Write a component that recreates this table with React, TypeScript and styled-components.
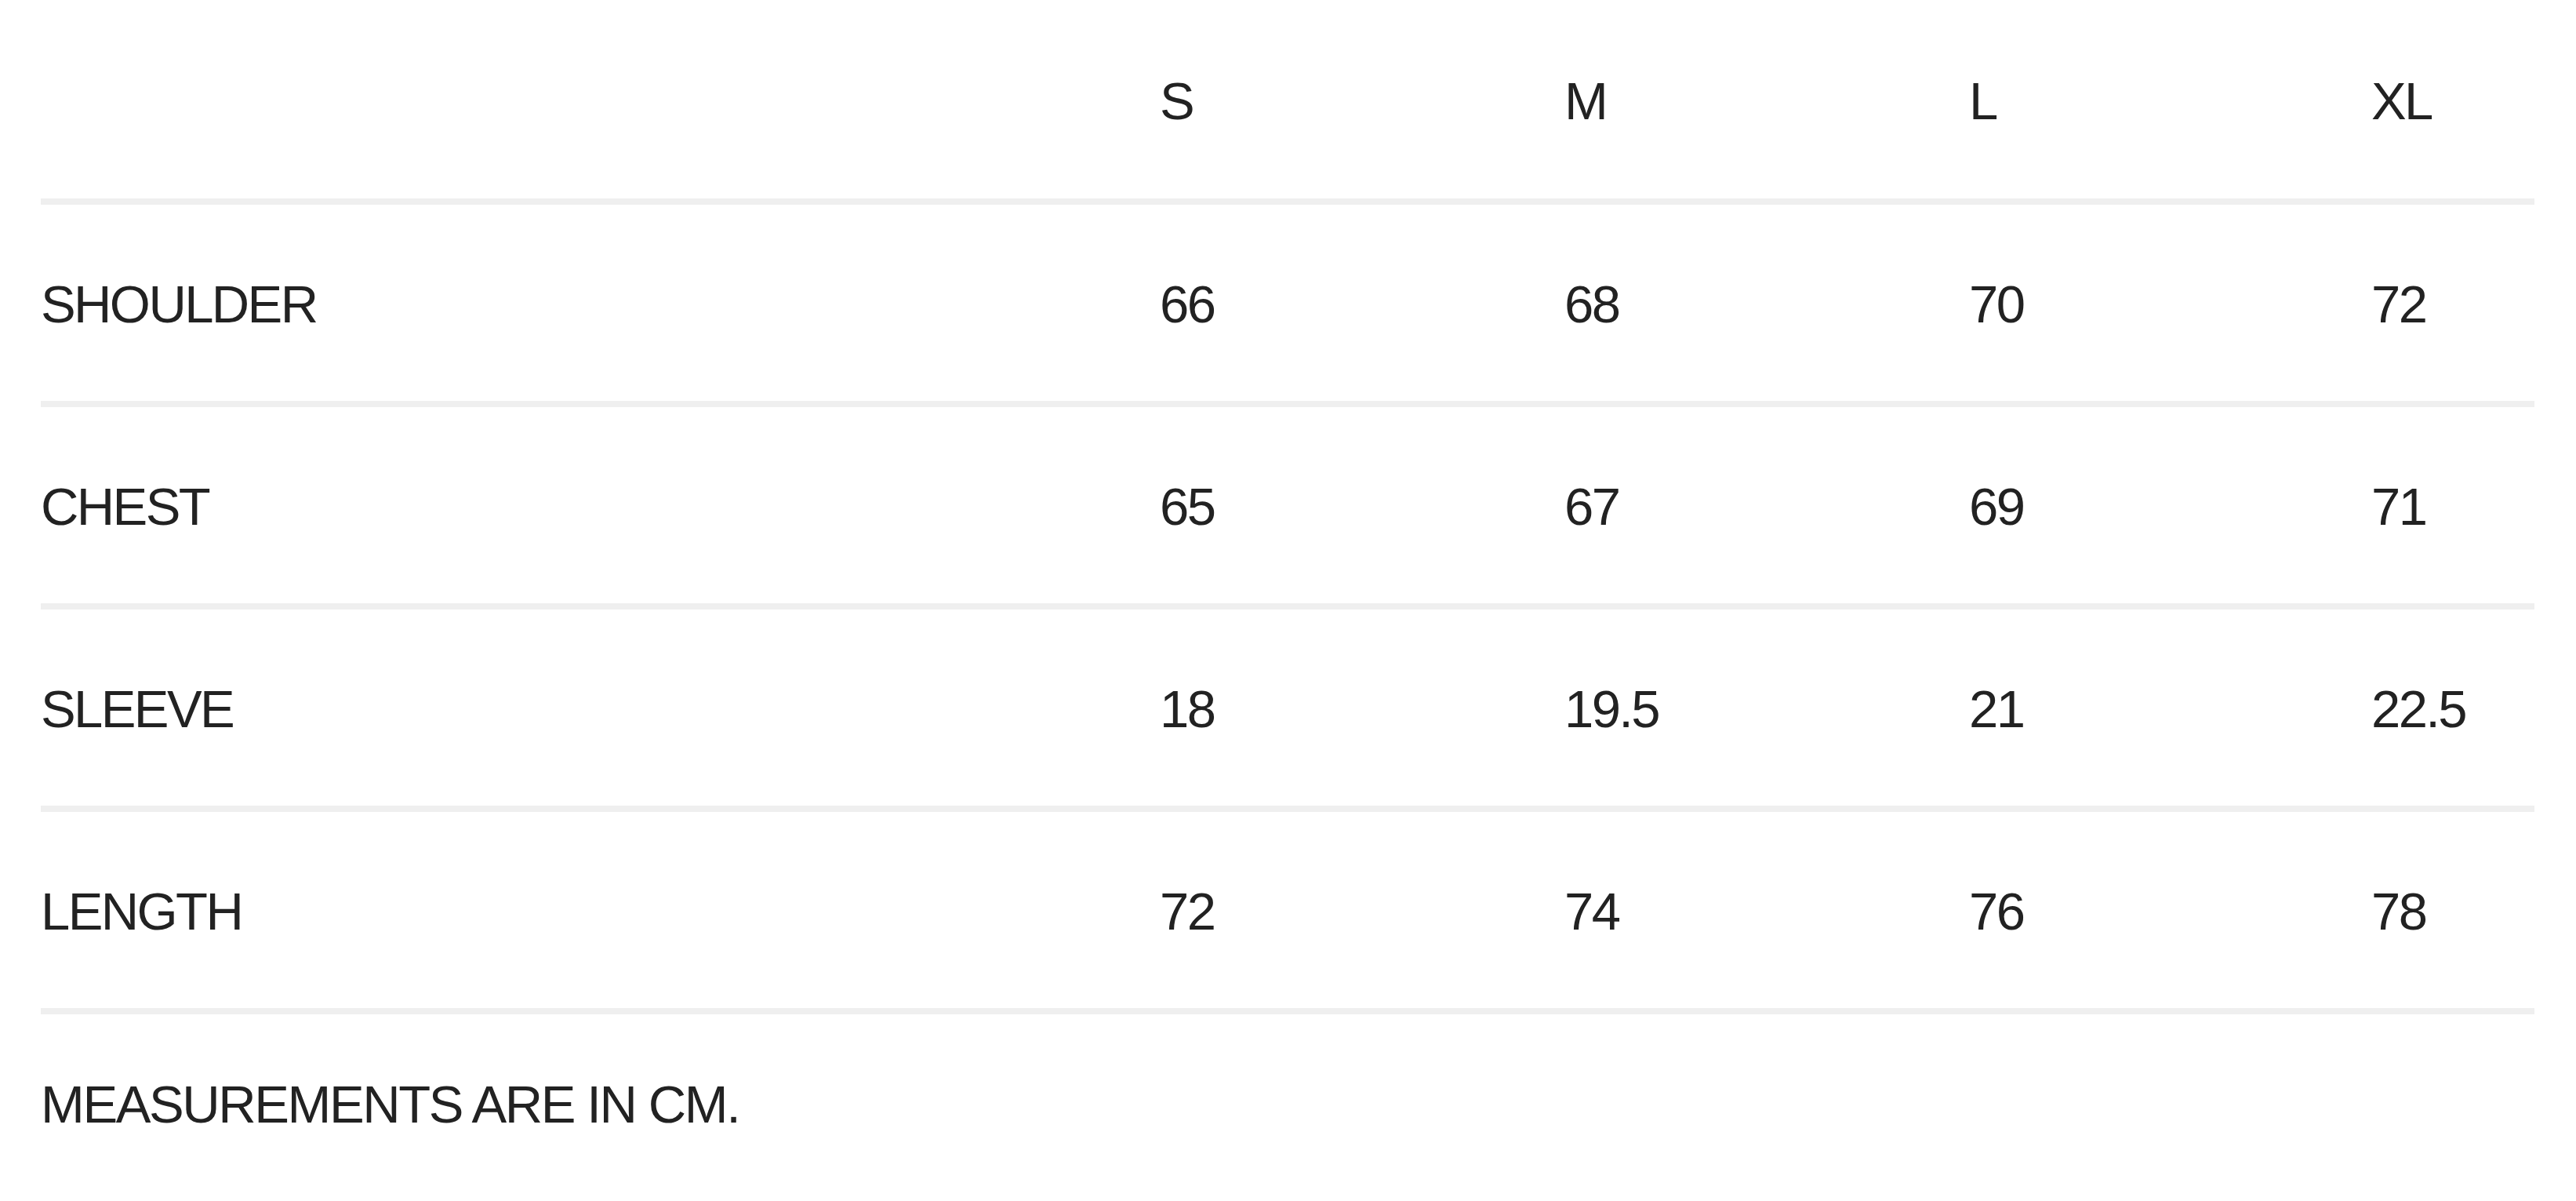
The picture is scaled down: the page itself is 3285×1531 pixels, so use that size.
import React from 'react';
import styled, { createGlobalStyle } from 'styled-components';

const sizes = ['S', 'M', 'L', 'XL'];

const rows = [
    { id: 'shoulder', label: 'SHOULDER', values: ['66', '68', '70', '72'] },
    { id: 'chest', label: 'CHEST', values: ['65', '67', '69', '71'] },
    { id: 'sleeve', label: 'SLEEVE', values: ['18', '19.5', '21', '22.5'] },
    { id: 'length', label: 'LENGTH', values: ['72', '74', '76', '78'] },
];

const GlobalStyle = createGlobalStyle`
    html, body {
        margin: 0;
        padding: 0;
        background: #ffffff;
    }
    body {
        font-family: "Liberation Sans", Arial, Helvetica, sans-serif;
        color: #222222;
    }
`;

const App = () => {
    return (
        <>
            <GlobalStyle />
            <Page>
                <Table>
                    <Row header>
                        <Cell />
                        {sizes.map(size => <Cell key={size}>{size}</Cell>)}
                    </Row>
                    {rows.map(row =>
                        <Row key={row.id}>
                            <Cell>{row.label}</Cell>
                            {row.values.map((val, idx) => <Cell key={sizes[idx]}>{val}</Cell>)}
                        </Row>
                    )}
                </Table>
                <Note>MEASUREMENTS ARE IN CM.</Note>
            </Page>
        </>
    );
}

export default App;

const Page = styled.div`
    width: 3180px;
    padding: 0 52px;
`;
const Table = styled.div`
    display: flex;
    flex-direction: column;
`;
interface IRow {
    header?: boolean
}
const Row = styled.div<IRow>`
    display: grid;
    grid-template-columns: 1427px 516px 516px 513px 1fr;
    align-items: center;
    height: ${props => props.header ? '253px' : '250px'};
    border-bottom: 8px solid #efefef;
`;
const Cell = styled.div`
    font-size: 67px;
    line-height: 1;
    letter-spacing: -2.6px;
    font-weight: 400;
    white-space: nowrap;
    padding-top: 3px;
`;
const Note = styled.div`
    display: flex;
    align-items: center;
    height: 224px;
    padding-top: 2px;
    font-size: 67px;
    line-height: 1;
    letter-spacing: -2.4px;
`;
